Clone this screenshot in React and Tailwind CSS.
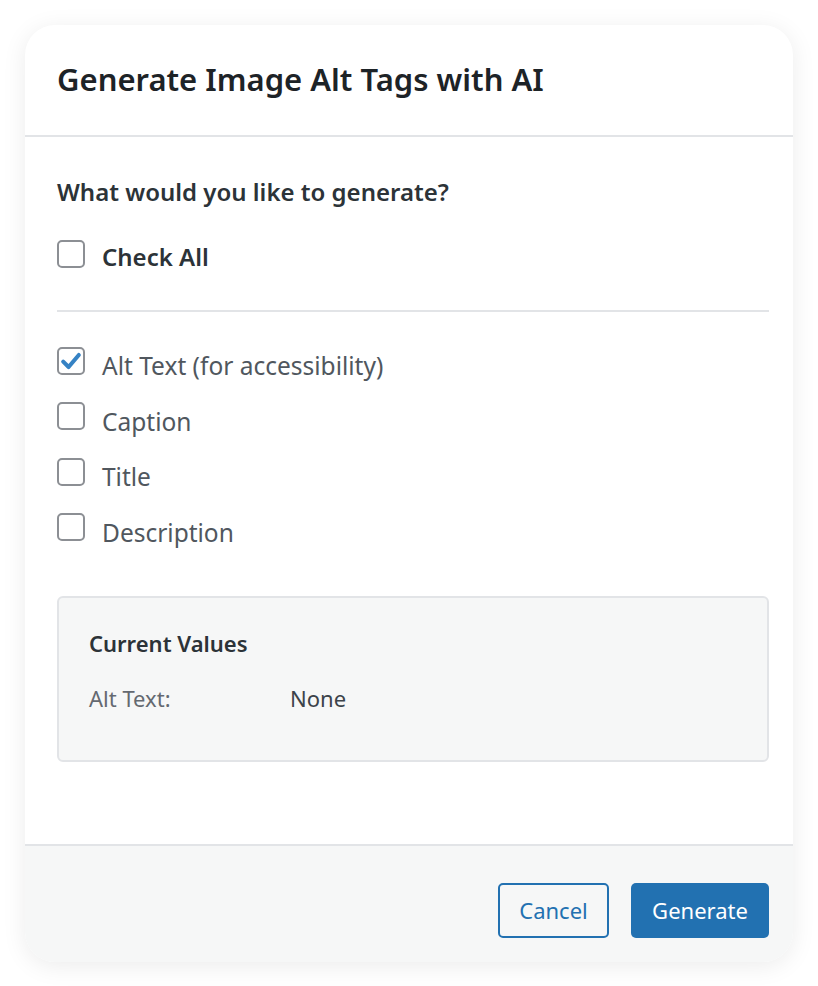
import React, { useState } from 'react';

const font = { fontFamily: '"Noto Sans", "Open Sans", Arial, sans-serif' };

const Checkbox = ({ checked, onChange }) => (
  <button
    type="button"
    onClick={onChange}
    className="w-[28px] h-[28px] shrink-0 rounded-[5px] border-2 border-[#8c8f94] bg-white flex items-center justify-center"
  >
    {checked && (
      <svg viewBox="0 0 20 20" className="w-[24px] h-[24px]">
        <path d="M3.5 10.5l4.5 4.5 8.5-10" fill="none" stroke="#3582c4" strokeWidth="3.4" strokeLinecap="round" strokeLinejoin="round" />
      </svg>
    )}
  </button>
);

export default function App() {
  const [fields, setFields] = useState({ alt: true, caption: false, title: false, description: false });
  const allChecked = Object.values(fields).every(Boolean);

  const toggle = (key) => setFields({ ...fields, [key]: !fields[key] });
  const toggleAll = () => {
    const next = !allChecked;
    setFields({ alt: next, caption: next, title: next, description: next });
  };

  const options = [
    { key: 'alt', label: 'Alt Text (for accessibility)' },
    { key: 'caption', label: 'Caption' },
    { key: 'title', label: 'Title' },
    { key: 'description', label: 'Description' },
  ];

  return (
    <div className="min-h-screen bg-white pt-[25px] pl-[25px]" style={font}>
      <div className="w-[768px] h-[937px] bg-white rounded-[30px] shadow-[0_4px_24px_rgba(0,0,0,0.08)] flex flex-col overflow-hidden">
        {/* Header */}
        <div className="h-[112px] shrink-0 border-b-2 border-[#e2e4e7] flex items-center px-[32px] pb-[2px]">
          <h2 className="text-[31px] font-semibold text-[#1d2327] leading-[40px]">Generate Image Alt Tags with AI</h2>
        </div>

        {/* Body */}
        <div className="flex-1 pl-[32px] pr-[24px] pt-[39px]">
          <p className="text-[24px] font-semibold text-[#2c3338] leading-[32px]">What would you like to generate?</p>
          <label className="mt-[26px] flex items-center gap-[17px] h-[40px] cursor-pointer">
            <Checkbox checked={allChecked} onChange={toggleAll} />
            <span className="text-[24px] font-semibold text-[#2c3338] leading-[32px] mt-[6px]">Check All</span>
          </label>

          <div className="mt-[36px] border-t-2 border-[#e2e4e7]" />

          <div className="mt-[21px] flex flex-col">
            {options.map((o) => (
              <label key={o.key} className="h-[55.5px] flex items-center gap-[17px] cursor-pointer">
                <Checkbox checked={fields[o.key]} onChange={() => toggle(o.key)} />
                <span className="text-[24.5px] text-[#50575e] leading-[32px] mt-[11px]">{o.label}</span>
              </label>
            ))}
          </div>

          <div className="mt-[41px] h-[166px] rounded-[6px] border-2 border-[#e2e4e7] bg-[#f6f7f7] px-[30px] pt-[29px]">
            <h3 className="text-[22px] font-semibold text-[#2c3338] leading-[32px]">Current Values</h3>
            <div className="mt-[25px] flex text-[22px] leading-[28px]">
              <span className="w-[201px] text-[#646970]">Alt Text:</span>
              <span className="text-[#3c434a]">None</span>
            </div>
          </div>
        </div>

        {/* Footer */}
        <div className="h-[118px] shrink-0 border-t-2 border-[#e2e4e7] bg-[#f6f7f7] flex items-start justify-end gap-[22px] pr-[24px] pt-[37px]">
          <button className="h-[55px] w-[111px] rounded-[5px] border-2 border-[#2271b1] bg-[#f6f7f7] text-[22px] text-[#2271b1]">
            Cancel
          </button>
          <button className="h-[55px] w-[138px] rounded-[5px] bg-[#2271b1] text-[22px] text-white">
            Generate
          </button>
        </div>
      </div>
    </div>
  );
}
